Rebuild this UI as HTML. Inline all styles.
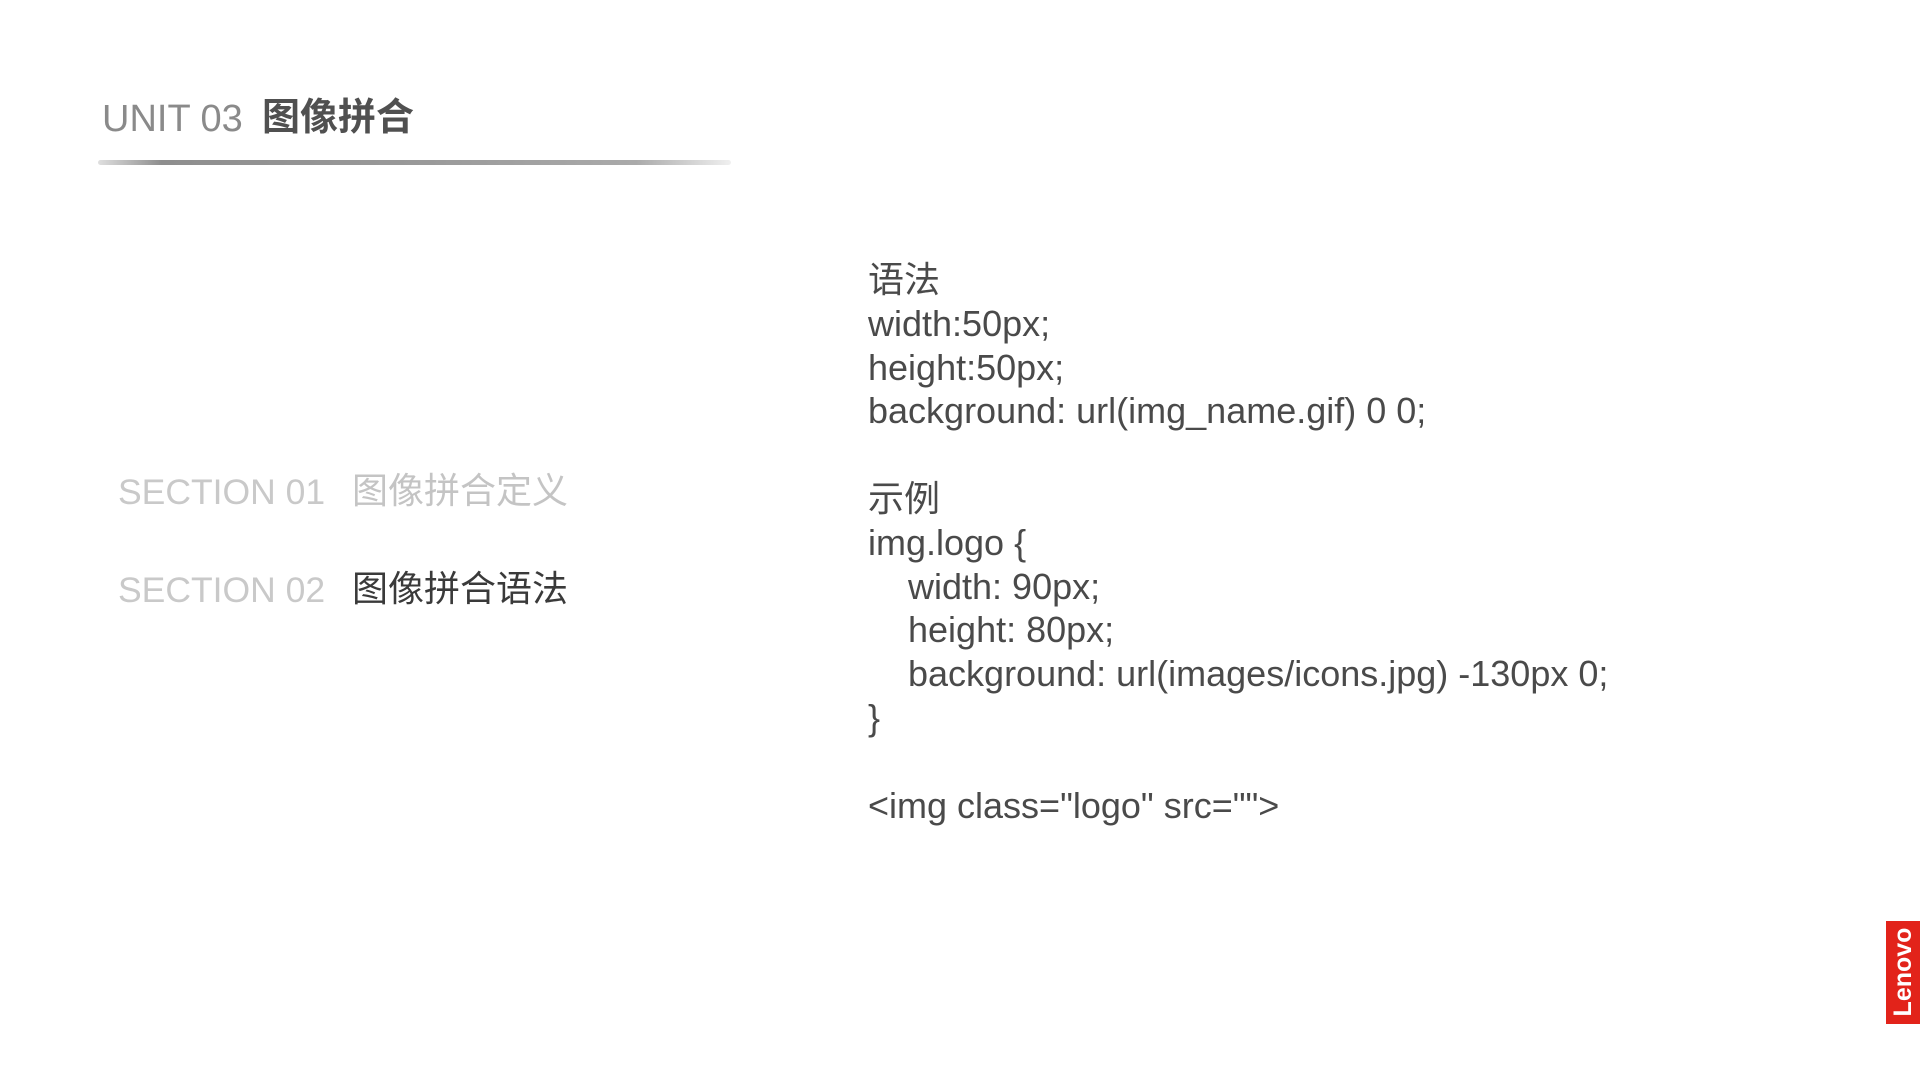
<!DOCTYPE html>
<html><head><meta charset="utf-8"><style>
html,body{margin:0;padding:0;background:#fff;}
body{width:1920px;height:1080px;position:relative;overflow:hidden;font-family:"Liberation Sans","Noto Sans CJK SC",sans-serif;}
.a{position:absolute;white-space:pre;}
.code{position:absolute;left:868px;font-size:36px;color:#4a4a4a;line-height:43.8px;white-space:pre;}
</style></head><body>
<div class="a" style="left:102px;top:95px;font-size:38px;color:#8a8a8a;line-height:48px;">UNIT 03</div>
<div class="a" style="left:262px;top:94px;font-size:38px;color:#505050;font-weight:bold;line-height:48px;">图像拼合</div>
<div style="position:absolute;left:98px;top:160px;width:633px;height:5px;background:linear-gradient(90deg,rgba(150,150,150,0.3),#8e8e8e 10%,#999 50%,#aaa 85%,rgba(180,180,180,0.2));border-radius:3px;"></div>
<div class="a" style="left:118px;top:470px;font-size:35.5px;color:#c9c9c9;line-height:44px;">SECTION 01</div>
<div class="a" style="left:352px;top:469px;font-size:36px;color:#c4c4c4;line-height:44px;">图像拼合定义</div>
<div class="a" style="left:118px;top:568px;font-size:35.5px;color:#c9c9c9;line-height:44px;">SECTION 02</div>
<div class="a" style="left:352px;top:567px;font-size:36px;color:#3a3a3a;line-height:44px;">图像拼合语法</div>
<div class="code" style="top:258px;">语法
width:50px;
height:50px;
background: url(img_name.gif) 0 0;

示例
img.logo {
    width: 90px;
    height: 80px;
    background: url(images/icons.jpg) -130px 0;
}

&lt;img class="logo" src=""&gt;</div>
<div style="position:absolute;left:1886px;top:921px;width:34px;height:103px;background:#e2231a;"></div>
<div class="a" style="left:1903px;top:972px;transform:translate(-50%,-50%) rotate(-90deg);color:#fff;font-weight:bold;font-size:25px;line-height:30px;">Lenovo</div>
</body></html>
